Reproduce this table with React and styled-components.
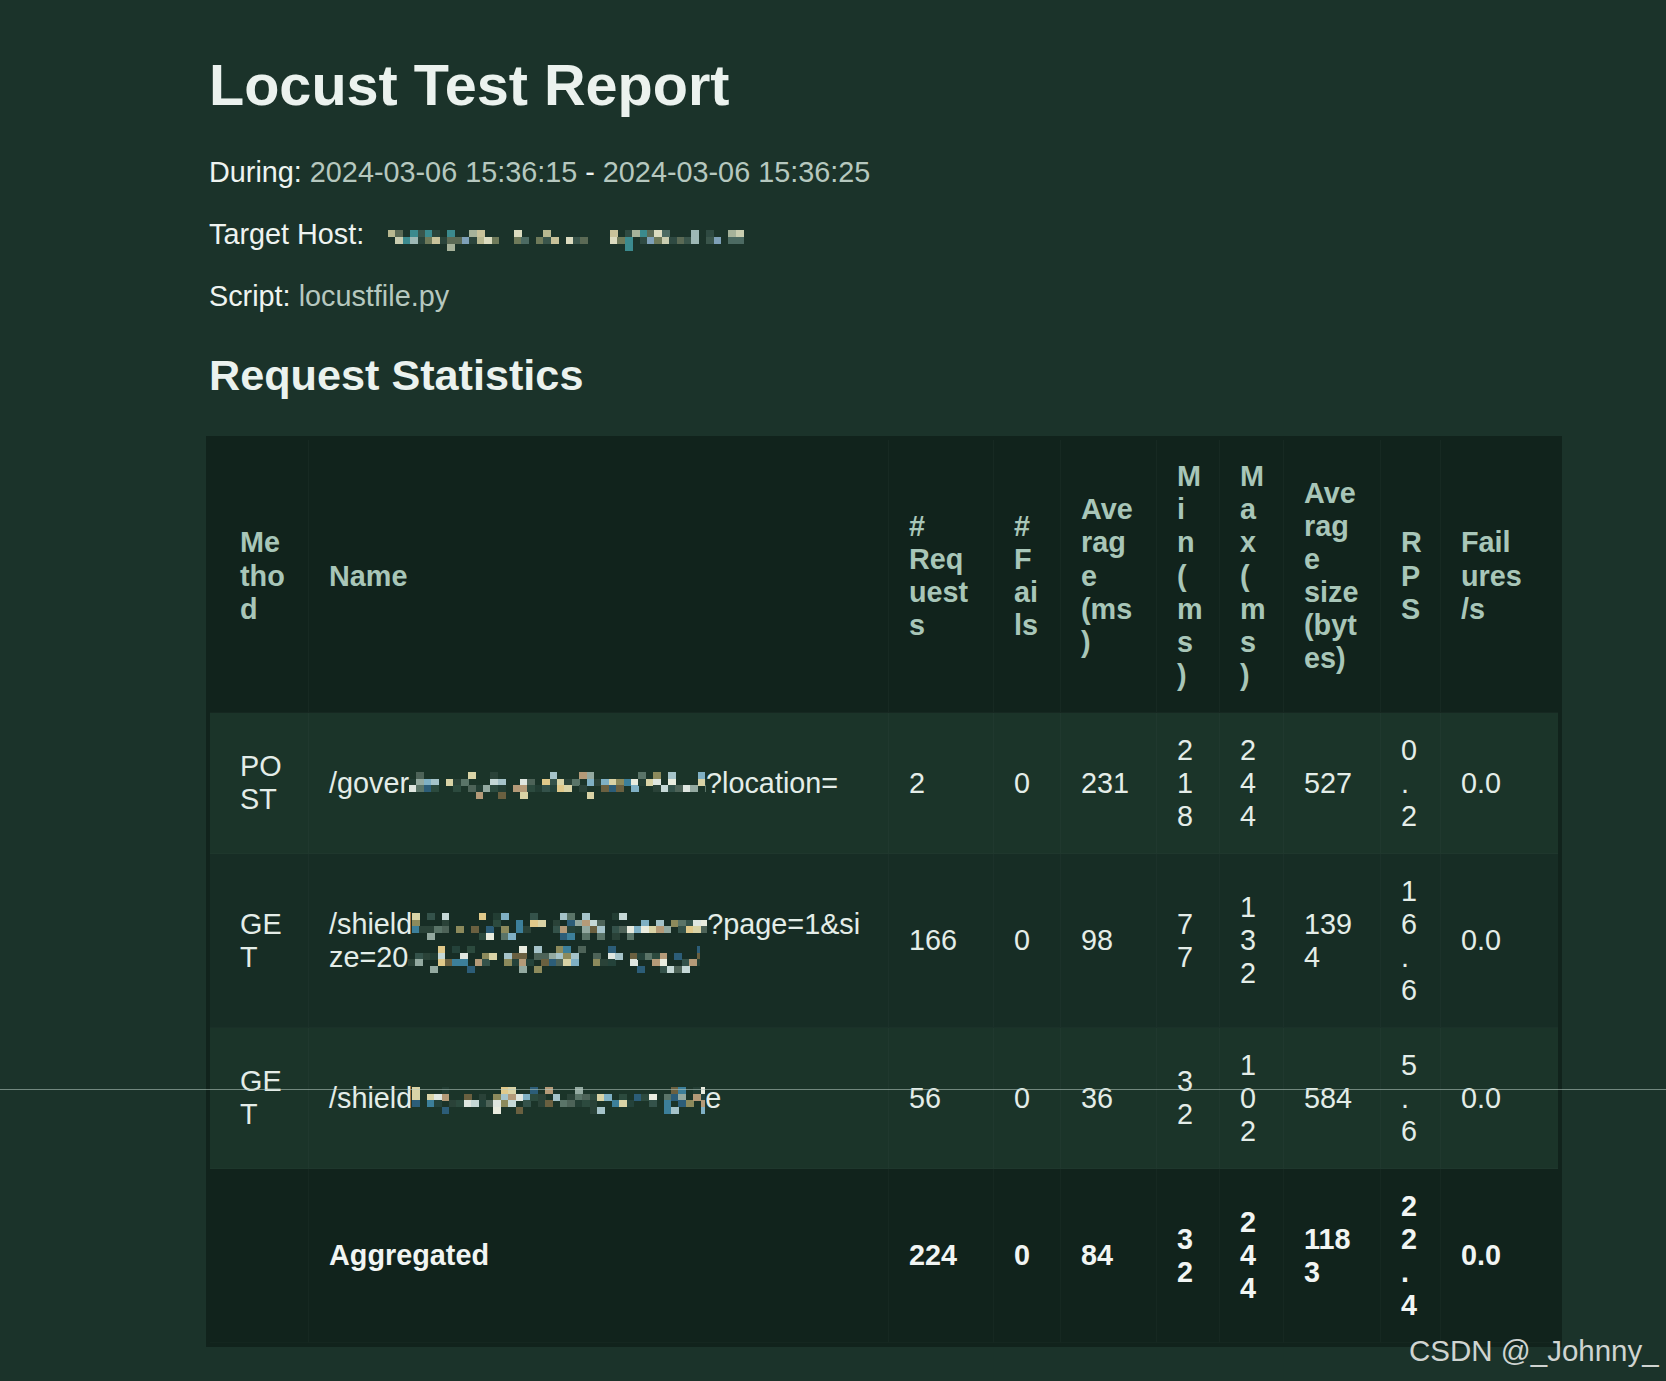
import React, { useMemo } from 'react';
import styled, { createGlobalStyle } from 'styled-components';

const GlobalStyle = createGlobalStyle`
  html, body {
    margin: 0;
    padding: 0;
    background: #1b332a;
  }
  body {
    font-family: "Liberation Sans", Arial, Helvetica, sans-serif;
  }
`;

const Page = styled.div`
  position: relative;
  box-sizing: border-box;
  min-height: 1381px;
  padding: 52px 0 0 206px;
  background: #1b332a;
  color: #eaf1ed;
  font-size: 28.8px;
  line-height: 1.15;
  overflow: hidden;
`;

const Report = styled.main`
  width: 1356px;
  display: flex;
  flex-direction: column;
`;

const Title = styled.h1`
  margin: 0 0 38px 3px;
  font-size: 57.6px;
  line-height: 1.15;
  font-weight: 700;
  color: #ebf2ee;
`;

const InfoList = styled.div`
  display: flex;
  flex-direction: column;
  gap: 28.8px;
  margin-left: 3px;
`;

const InfoLine = styled.p`
  margin: 0;
  color: #eef3f0;
`;

const InfoValue = styled.span`
  color: #b6c8bf;
`;

const SectionTitle = styled.h2`
  margin: 38px 0 35px 3px;
  font-size: 43.2px;
  line-height: 1.15;
  font-weight: 700;
  color: #ebf2ee;
`;

const StatsTable = styled.table`
  width: 1356px;
  table-layout: fixed;
  border-collapse: separate;
  border-spacing: 0;
  border: 4px solid #11231c;
  background: #11231c;
  font-size: 28.8px;
  line-height: 1.15;
`;

const HeadCell = styled.th`
  padding: 20.4px 20px;
  text-align: left;
  vertical-align: middle;
  font-weight: 700;
  color: #a8c6b8;
  background: #11231c;
  border-left: 1px solid rgba(255, 255, 255, 0.025);
  border-bottom: 1px solid rgba(255, 255, 255, 0.02);
  overflow-wrap: anywhere;
  &:first-child {
    padding-left: 30px;
    border-left: 0;
  }
  &:last-child {
    padding-right: 32px;
  }
`;

const Row = styled.tr`
  background: ${(p) =>
    p.$variant === 'total' ? '#11231c' : p.$variant === 'even' ? '#172d25' : '#1b3429'};
  color: ${(p) => (p.$variant === 'total' ? '#f1f5f3' : '#e4ede8')};
  font-weight: ${(p) => (p.$variant === 'total' ? 700 : 400)};
`;

const Cell = styled.td`
  padding: 20.3px 20px;
  text-align: left;
  vertical-align: middle;
  border-left: 1px solid rgba(255, 255, 255, 0.02);
  border-bottom: 1px solid rgba(255, 255, 255, 0.015);
  overflow-wrap: anywhere;
  &:first-child {
    padding-left: 30px;
    border-left: 0;
  }
  &:last-child {
    padding-right: 32px;
  }
`;

const MosaicSvg = styled.svg`
  display: inline-block;
  vertical-align: ${(p) => p.$drop}px;
  margin-left: ${(p) => p.$gap || 0}px;
`;

const ScanLine = styled.div`
  position: absolute;
  left: 0;
  right: 0;
  top: 1089px;
  height: 1px;
  background: rgba(185, 205, 196, 0.55);
  pointer-events: none;
  z-index: 2;
`;

const Watermark = styled.div`
  position: absolute;
  left: 1409px;
  top: 1334px;
  font-size: 29.5px;
  line-height: 1.15;
  color: #cfd4d1;
  white-space: nowrap;
  pointer-events: none;
  z-index: 3;
`;

function mulberry32(seed) {
  let a = seed;
  return function () {
    a |= 0;
    a = (a + 0x6d2b79f5) | 0;
    let t = Math.imul(a ^ (a >>> 15), 1 | a);
    t = (t + Math.imul(t ^ (t >>> 7), 61 | t)) ^ t;
    return ((t ^ (t >>> 14)) >>> 0) / 4294967296;
  };
}

const TABLE_PALETTE = [
  '#e9ecdf', '#d9d3a6', '#a5c3c9', '#7fb0c4', '#3c7f9a', '#2c5d78',
  '#8c8a5c', '#6a6040', '#b49a78', '#93a9a0', '#4d6358', '#2c4a3e',
  '#223d33', '#e0c98a', '#2a4238', '#c5d8d6', '#5a7468', '#dfe6e0',
  '#24423a', '#34524a',
];

const HOST_PALETTE = [
  '#b8b890', '#a6b29a', '#3b8a8e', '#c9cdb0', '#9db8b5', '#5b6a55',
  '#2f4a42', '#6f7a5a', '#c8c29a', '#7ea0b8', '#4c6a62', '#dcdcc0',
  '#2a443b', '#3a554b',
];

function Mosaic({ width, seed, rows = 4, rowH = 6.6, cell = 7.4, density, palette, drop, gap }) {
  const rects = useMemo(() => {
    const rnd = mulberry32(seed);
    const cols = Math.ceil(width / cell);
    const out = [];
    for (let c = 0; c < cols; c++) {
      for (let r = 0; r < rows; r++) {
        if (rnd() < density[r]) {
          out.push({
            x: c * cell,
            y: r * rowH,
            fill: palette[Math.floor(rnd() * palette.length)],
          });
        }
      }
    }
    return out;
  }, [width, seed, rows, rowH, cell, density, palette]);
  const height = rows * rowH;
  return (
    <MosaicSvg
      width={width}
      height={height}
      viewBox={`0 0 ${width} ${height}`}
      $drop={drop}
      $gap={gap}
      aria-hidden="true"
      shapeRendering="crispEdges"
    >
      {rects.map((r, i) => (
        <rect key={i} x={r.x} y={r.y} width={cell + 0.4} height={rowH + 0.4} fill={r.fill} />
      ))}
    </MosaicSvg>
  );
}

const ROW_DENSITY = [0.22, 0.7, 0.68, 0.18];
const HOST_DENSITY = [0.55, 0.8, 0.05];

function Redacted({ width, seed }) {
  return <Mosaic width={width} seed={seed} density={ROW_DENSITY} palette={TABLE_PALETTE} drop={-6} />;
}

const columns = [
  { key: 'method', label: 'Method', width: 98 },
  { key: 'name', label: 'Name', width: 580 },
  { key: 'req', label: '# Requests', width: 105 },
  { key: 'fails', label: '# Fails', width: 67 },
  { key: 'avg', label: 'Average (ms)', width: 96 },
  { key: 'min', label: 'Min (ms)', width: 63 },
  { key: 'max', label: 'Max (ms)', width: 64 },
  { key: 'size', label: 'Average size (bytes)', width: 97 },
  { key: 'rps', label: 'RPS', width: 60 },
  { key: 'fps', label: 'Failures/s', width: 118 },
];

const rows = [
  {
    id: 'r1',
    variant: 'odd',
    method: 'POST',
    name: (
      <>
        /gover<Redacted width={297} seed={11} />?location=
      </>
    ),
    req: '2', fails: '0', avg: '231', min: '218', max: '244', size: '527', rps: '0.2', fps: '0.0',
  },
  {
    id: 'r2',
    variant: 'even',
    method: 'GET',
    name: (
      <>
        /shield<Redacted width={295} seed={23} />?page=1&amp;si
        <br />
        ze=20<Redacted width={292} seed={37} />
      </>
    ),
    req: '166', fails: '0', avg: '98', min: '77', max: '132', size: '1394', rps: '16.6', fps: '0.0',
  },
  {
    id: 'r3',
    variant: 'odd',
    method: 'GET',
    name: (
      <>
        /shield<Redacted width={293} seed={51} />e
      </>
    ),
    req: '56', fails: '0', avg: '36', min: '32', max: '102', size: '584', rps: '5.6', fps: '0.0',
  },
  {
    id: 'agg',
    variant: 'total',
    method: '',
    name: 'Aggregated',
    req: '224', fails: '0', avg: '84', min: '32', max: '244', size: '1183', rps: '22.4', fps: '0.0',
  },
];

export default function App() {
  return (
    <>
      <GlobalStyle />
      <Page>
        <Report>
          <Title>Locust Test Report</Title>
          <InfoList>
            <InfoLine>
              During: <InfoValue>2024-03-06 15:36:15</InfoValue> - <InfoValue>2024-03-06 15:36:25</InfoValue>
            </InfoLine>
            <InfoLine>
              Target Host:{' '}
              <Mosaic
                width={356}
                seed={7}
                rows={3}
                rowH={7}
                cell={7.4}
                density={HOST_DENSITY}
                palette={HOST_PALETTE}
                drop={-7}
                gap={16}
              />
            </InfoLine>
            <InfoLine>
              Script: <InfoValue>locustfile.py</InfoValue>
            </InfoLine>
          </InfoList>
          <SectionTitle>Request Statistics</SectionTitle>
          <StatsTable>
            <colgroup>
              {columns.map((c) => (
                <col key={c.key} style={{ width: c.width }} />
              ))}
            </colgroup>
            <thead>
              <tr>
                {columns.map((c) => (
                  <HeadCell key={c.key}>{c.label}</HeadCell>
                ))}
              </tr>
            </thead>
            <tbody>
              {rows.map((r) => (
                <Row key={r.id} $variant={r.variant}>
                  {columns.map((c) => (
                    <Cell key={c.key}>{r[c.key]}</Cell>
                  ))}
                </Row>
              ))}
            </tbody>
          </StatsTable>
        </Report>
        <ScanLine />
        <Watermark>CSDN @_Johnny_</Watermark>
      </Page>
    </>
  );
}
